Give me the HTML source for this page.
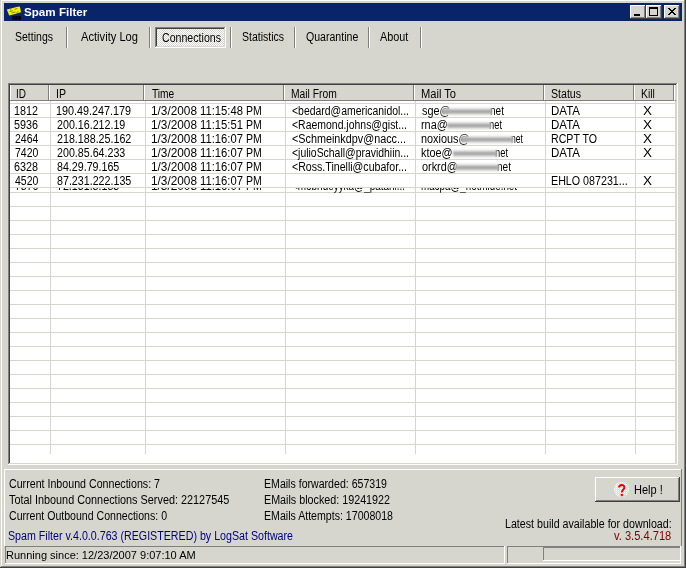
<!DOCTYPE html><html><head><meta charset="utf-8"><title>Spam Filter</title><style>
html,body{margin:0;padding:0}
body{width:686px;height:568px;background:#d6d6ce;position:relative;overflow:hidden;font-family:"Liberation Sans", Arial, sans-serif;font-size:12.5px;color:#000}
div,span,svg{position:absolute;display:block}
.t{white-space:pre;transform-origin:0 0;line-height:1}
.lv{overflow:hidden}
</style></head><body>
<div style="left:0px;top:0px;width:686px;height:1px;background:#fff;"></div>
<div style="left:0px;top:0px;width:1px;height:568px;background:#d6d6ce;"></div>
<div style="left:1px;top:0px;width:1px;height:567px;background:#fff;"></div>
<div style="left:684px;top:0px;width:1px;height:567px;background:#808080;"></div>
<div style="left:685px;top:0px;width:1px;height:568px;background:#404040;"></div>
<div style="left:1px;top:566px;width:684px;height:1px;background:#808080;"></div>
<div style="left:0px;top:567px;width:686px;height:1px;background:#404040;"></div>
<div style="left:4px;top:3px;width:678px;height:18px;background:#0a246a;"></div>
<svg style="left:4px;top:4px" width="18" height="17" viewBox="4 4 18 17"><polygon points="6.8,9.4 12,8.2 16.5,6.9 19.7,6.4 20.4,9 20.9,12.2 15,13.9 9.2,15.4 8,12.5" fill="#f6f008"/><path d="M9.6 11.6 L12.8 10.7 M11.6 13 L15.6 11.9 M14.6 9.3 L17.4 8.6 M16.6 12.4 L18.6 11.7 M10 10 L11.2 9.7" stroke="#7c7a18" stroke-width="0.9" fill="none"/><path d="M12.2 19.7 V16.6 H13.6 V16.1 H15 V16.6 H16.2 V16 H18 V16.5 H19.4 V16.1 H21 V19.7 Z" fill="#00000c"/><rect x="14" y="17.3" width="0.9" height="1.4" fill="#0a246a"/><rect x="17.2" y="17.3" width="0.9" height="1.4" fill="#0a246a"/></svg>
<div style="left:630px;top:5px;width:16px;height:14px;background:#d6d6ce;"></div><div style="left:630px;top:5px;width:15px;height:1px;background:#fff;"></div><div style="left:630px;top:5px;width:1px;height:13px;background:#fff;"></div><div style="left:630px;top:18px;width:16px;height:1px;background:#404040;"></div><div style="left:645px;top:5px;width:1px;height:14px;background:#404040;"></div><div style="left:631px;top:17px;width:14px;height:1px;background:#808080;"></div><div style="left:644px;top:6px;width:1px;height:12px;background:#808080;"></div>
<div style="left:646px;top:5px;width:16px;height:14px;background:#d6d6ce;"></div><div style="left:646px;top:5px;width:15px;height:1px;background:#fff;"></div><div style="left:646px;top:5px;width:1px;height:13px;background:#fff;"></div><div style="left:646px;top:18px;width:16px;height:1px;background:#404040;"></div><div style="left:661px;top:5px;width:1px;height:14px;background:#404040;"></div><div style="left:647px;top:17px;width:14px;height:1px;background:#808080;"></div><div style="left:660px;top:6px;width:1px;height:12px;background:#808080;"></div>
<div style="left:664px;top:5px;width:16px;height:14px;background:#d6d6ce;"></div><div style="left:664px;top:5px;width:15px;height:1px;background:#fff;"></div><div style="left:664px;top:5px;width:1px;height:13px;background:#fff;"></div><div style="left:664px;top:18px;width:16px;height:1px;background:#404040;"></div><div style="left:679px;top:5px;width:1px;height:14px;background:#404040;"></div><div style="left:665px;top:17px;width:14px;height:1px;background:#808080;"></div><div style="left:678px;top:6px;width:1px;height:12px;background:#808080;"></div>
<div style="left:634px;top:14px;width:6px;height:2px;background:#000;"></div>
<div style="left:649px;top:7px;width:9px;height:9px;background:transparent;box-sizing:border-box;border:1px solid #000;border-top-width:2px"></div>
<svg style="left:668px;top:8px" width="8" height="7" viewBox="0 0 8 7" shape-rendering="crispEdges"><path d="M0 0h2v1h1v1h1v1h1v1h1v1h1v1h1v1h-2v-1h-1v-1h-1v-1h-1v-1h-1v-1h-1z M6 0h2v1h-1v1h-1v1h-1v1h-1v1h-1v1h-1v1h-2v-1h1v-1h1v-1h1v-1h1v-1h1v-1h1z" fill="#000"/></svg>
<div style="left:66px;top:27px;width:1px;height:21px;background:#808080;"></div>
<div style="left:67px;top:27px;width:1px;height:21px;background:#fff;"></div>
<div style="left:149px;top:27px;width:1px;height:21px;background:#808080;"></div>
<div style="left:150px;top:27px;width:1px;height:21px;background:#fff;"></div>
<div style="left:230px;top:27px;width:1px;height:21px;background:#808080;"></div>
<div style="left:231px;top:27px;width:1px;height:21px;background:#fff;"></div>
<div style="left:294px;top:27px;width:1px;height:21px;background:#808080;"></div>
<div style="left:295px;top:27px;width:1px;height:21px;background:#fff;"></div>
<div style="left:368px;top:27px;width:1px;height:21px;background:#808080;"></div>
<div style="left:369px;top:27px;width:1px;height:21px;background:#fff;"></div>
<div style="left:420px;top:27px;width:1px;height:21px;background:#808080;"></div>
<div style="left:421px;top:27px;width:1px;height:21px;background:#fff;"></div>
<div style="left:155px;top:27px;width:71px;height:21px;background-color:#d6d6ce;background-image:linear-gradient(45deg,#fff 25%,transparent 25%,transparent 75%,#fff 75%),linear-gradient(45deg,#fff 25%,transparent 25%,transparent 75%,#fff 75%);background-size:2px 2px;background-position:0 0,1px 1px"></div>
<div style="left:155px;top:27px;width:71px;height:1px;background:#808080;"></div>
<div style="left:155px;top:27px;width:1px;height:21px;background:#808080;"></div>
<div style="left:156px;top:28px;width:69px;height:1px;background:#404040;"></div>
<div style="left:156px;top:28px;width:1px;height:19px;background:#404040;"></div>
<div style="left:155px;top:47px;width:71px;height:1px;background:#fff;"></div>
<div style="left:225px;top:27px;width:1px;height:21px;background:#fff;"></div>
<div style="left:156px;top:46px;width:69px;height:1px;background:#d6d6ce;"></div>
<div style="left:224px;top:28px;width:1px;height:19px;background:#d6d6ce;"></div>
<div style="left:8px;top:83px;width:670px;height:1px;background:#808080;"></div>
<div style="left:8px;top:83px;width:1px;height:382px;background:#808080;"></div>
<div style="left:9px;top:84px;width:668px;height:1px;background:#404040;"></div>
<div style="left:9px;top:84px;width:1px;height:380px;background:#404040;"></div>
<div style="left:8px;top:464px;width:670px;height:1px;background:#fff;"></div>
<div style="left:677px;top:83px;width:1px;height:382px;background:#fff;"></div>
<div style="left:9px;top:463px;width:668px;height:1px;background:#d6d6ce;"></div>
<div style="left:676px;top:84px;width:1px;height:380px;background:#d6d6ce;"></div>
<div style="left:10px;top:85px;width:666px;height:378px;background:#fff;"></div>
<div style="left:10px;top:85px;width:666px;height:16px;background:#d6d6ce;"></div>
<div style="left:10px;top:85px;width:1px;height:15px;background:#fff;"></div>
<div style="left:48px;top:85px;width:1px;height:16px;background:#808080;"></div>
<div style="left:49px;top:85px;width:1px;height:15px;background:#fff;"></div>
<div style="left:143px;top:85px;width:1px;height:16px;background:#808080;"></div>
<div style="left:144px;top:85px;width:1px;height:15px;background:#fff;"></div>
<div style="left:283px;top:85px;width:1px;height:16px;background:#808080;"></div>
<div style="left:284px;top:85px;width:1px;height:15px;background:#fff;"></div>
<div style="left:413px;top:85px;width:1px;height:16px;background:#808080;"></div>
<div style="left:414px;top:85px;width:1px;height:15px;background:#fff;"></div>
<div style="left:543px;top:85px;width:1px;height:16px;background:#808080;"></div>
<div style="left:544px;top:85px;width:1px;height:15px;background:#fff;"></div>
<div style="left:633px;top:85px;width:1px;height:16px;background:#808080;"></div>
<div style="left:634px;top:85px;width:1px;height:15px;background:#fff;"></div>
<div style="left:673px;top:85px;width:1px;height:16px;background:#808080;"></div>
<div style="left:674px;top:85px;width:1px;height:15px;background:#fff;"></div>
<div style="left:10px;top:100px;width:664px;height:1px;background:#808080;"></div>
<div style="left:675px;top:100px;width:1px;height:1px;background:#808080;"></div>
<div style="left:50px;top:101px;width:1px;height:353px;background:#d6d6ce;"></div>
<div style="left:145px;top:101px;width:1px;height:353px;background:#d6d6ce;"></div>
<div style="left:285px;top:101px;width:1px;height:353px;background:#d6d6ce;"></div>
<div style="left:415px;top:101px;width:1px;height:353px;background:#d6d6ce;"></div>
<div style="left:545px;top:101px;width:1px;height:353px;background:#d6d6ce;"></div>
<div style="left:635px;top:101px;width:1px;height:353px;background:#d6d6ce;"></div>
<div style="left:675px;top:101px;width:1px;height:362px;background:#d6d6ce;"></div>
<div style="left:10px;top:103px;width:666px;height:1px;background:#d6d6ce;"></div>
<div style="left:10px;top:117px;width:666px;height:1px;background:#d6d6ce;"></div>
<div style="left:10px;top:131px;width:666px;height:1px;background:#d6d6ce;"></div>
<div style="left:10px;top:145px;width:666px;height:1px;background:#d6d6ce;"></div>
<div style="left:10px;top:159px;width:666px;height:1px;background:#d6d6ce;"></div>
<div style="left:10px;top:173px;width:666px;height:1px;background:#d6d6ce;"></div>
<div style="left:10px;top:187px;width:666px;height:1px;background:#d6d6ce;"></div>
<div style="left:10px;top:192px;width:666px;height:1px;background:#d6d6ce;"></div>
<div style="left:10px;top:206px;width:666px;height:1px;background:#d6d6ce;"></div>
<div style="left:10px;top:220px;width:666px;height:1px;background:#d6d6ce;"></div>
<div style="left:10px;top:234px;width:666px;height:1px;background:#d6d6ce;"></div>
<div style="left:10px;top:248px;width:666px;height:1px;background:#d6d6ce;"></div>
<div style="left:10px;top:262px;width:666px;height:1px;background:#d6d6ce;"></div>
<div style="left:10px;top:276px;width:666px;height:1px;background:#d6d6ce;"></div>
<div style="left:10px;top:290px;width:666px;height:1px;background:#d6d6ce;"></div>
<div style="left:10px;top:304px;width:666px;height:1px;background:#d6d6ce;"></div>
<div style="left:10px;top:318px;width:666px;height:1px;background:#d6d6ce;"></div>
<div style="left:10px;top:332px;width:666px;height:1px;background:#d6d6ce;"></div>
<div style="left:10px;top:346px;width:666px;height:1px;background:#d6d6ce;"></div>
<div style="left:10px;top:360px;width:666px;height:1px;background:#d6d6ce;"></div>
<div style="left:10px;top:374px;width:666px;height:1px;background:#d6d6ce;"></div>
<div style="left:10px;top:388px;width:666px;height:1px;background:#d6d6ce;"></div>
<div style="left:10px;top:402px;width:666px;height:1px;background:#d6d6ce;"></div>
<div style="left:10px;top:416px;width:666px;height:1px;background:#d6d6ce;"></div>
<div style="left:10px;top:430px;width:666px;height:1px;background:#d6d6ce;"></div>
<div style="left:10px;top:444px;width:666px;height:1px;background:#d6d6ce;"></div>
<div style="left:4px;top:469px;width:678px;height:1px;background:#fff;"></div>
<div style="left:4px;top:469px;width:1px;height:77px;background:#fff;"></div>
<div style="left:681px;top:469px;width:1px;height:77px;background:#808080;"></div>
<div style="left:595px;top:477px;width:84px;height:1px;background:#fff;"></div>
<div style="left:595px;top:477px;width:1px;height:24px;background:#fff;"></div>
<div style="left:595px;top:501px;width:85px;height:1px;background:#404040;"></div>
<div style="left:679px;top:477px;width:1px;height:25px;background:#404040;"></div>
<div style="left:596px;top:500px;width:83px;height:1px;background:#808080;"></div>
<div style="left:678px;top:478px;width:1px;height:23px;background:#808080;"></div>
<svg style="left:613px;top:481px" width="17" height="17" viewBox="0 0 17 17"><defs><pattern id="dth" width="2" height="2" patternUnits="userSpaceOnUse"><rect width="2" height="2" fill="#ffff00"/><rect width="1" height="1" fill="#fff"/><rect x="1" y="1" width="1" height="1" fill="#fff"/></pattern></defs><circle cx="8.5" cy="8.5" r="7.5" fill="url(#dth)"/><path d="M6.1 6.6 C6.1 3.1 11.3 3.1 11.3 6.4 C11.3 8.5 8.8 8.8 8.8 11.5" fill="none" stroke="#e60000" stroke-width="2"/><rect x="7.7" y="12.9" width="2.2" height="2.3" fill="#e60000"/></svg>
<div style="left:5px;top:546px;width:499px;height:1px;background:#808080;"></div>
<div style="left:5px;top:546px;width:1px;height:17px;background:#808080;"></div>
<div style="left:5px;top:563px;width:500px;height:1px;background:#fff;"></div>
<div style="left:504px;top:546px;width:1px;height:18px;background:#fff;"></div>
<div style="left:507px;top:546px;width:173px;height:1px;background:#808080;"></div>
<div style="left:507px;top:546px;width:1px;height:17px;background:#808080;"></div>
<div style="left:507px;top:563px;width:174px;height:1px;background:#fff;"></div>
<div style="left:680px;top:546px;width:1px;height:18px;background:#fff;"></div>
<div style="left:543px;top:547px;width:137px;height:1px;background:#808080;"></div>
<div style="left:543px;top:546px;width:1px;height:14px;background:#808080;"></div>
<div style="left:543px;top:560px;width:137px;height:1px;background:#fff;"></div>
<span class="t" style="left:23.80px;top:6.56px;transform:scaleX(1.0567);color:#fff;font-weight:bold;font-size:11px;">Spam Filter</span>
<span class="t" style="left:15.00px;top:31.37px;transform:scaleX(0.8412);">Settings</span>
<span class="t" style="left:80.80px;top:31.37px;transform:scaleX(0.8917);">Activity Log</span>
<span class="t" style="left:162.00px;top:32.37px;transform:scaleX(0.8489);">Connections</span>
<span class="t" style="left:242.00px;top:31.37px;transform:scaleX(0.8397);">Statistics</span>
<span class="t" style="left:305.80px;top:31.37px;transform:scaleX(0.8455);">Quarantine</span>
<span class="t" style="left:379.80px;top:31.37px;transform:scaleX(0.8662);">About</span>
<span class="t" style="left:16.00px;top:88.37px;transform:scaleX(0.8000);">ID</span>
<span class="t" style="left:56.00px;top:88.37px;transform:scaleX(0.8466);">IP</span>
<span class="t" style="left:151.80px;top:88.37px;transform:scaleX(0.8160);">Time</span>
<span class="t" style="left:291.00px;top:88.37px;transform:scaleX(0.8231);">Mail From</span>
<span class="t" style="left:421.00px;top:88.37px;transform:scaleX(0.8889);">Mail To</span>
<span class="t" style="left:551.00px;top:88.37px;transform:scaleX(0.8466);">Status</span>
<span class="t" style="left:641.00px;top:88.37px;transform:scaleX(0.8294);">Kill</span>
<span class="t" style="left:14.00px;top:105.37px;transform:scaleX(0.8629);">1812</span>
<span class="t" style="left:56.00px;top:105.37px;transform:scaleX(0.8632);">190.49.247.179</span>
<span class="t" style="left:151.00px;top:105.37px;transform:scaleX(0.9451);">1/3/2008</span>
<span class="t" style="left:200.00px;top:105.37px;transform:scaleX(0.9008);">11:15:48</span>
<span class="t" style="left:246.00px;top:105.37px;transform:scaleX(0.8431);">PM</span>
<span class="t" style="left:291.80px;top:105.37px;transform:scaleX(0.8345);">&lt;bedard@americanidol...</span>
<span class="t" style="left:421.80px;top:105.37px;transform:scaleX(0.8700);">sge@</span>
<span class="t" style="left:490.00px;top:105.37px;transform:scaleX(0.8050);">net</span>
<span class="t" style="left:551.00px;top:105.37px;transform:scaleX(0.9211);">DATA</span>
<span class="t" style="left:643.00px;top:105.37px;transform:scaleX(1.0787);">X</span>
<span class="t" style="left:14.00px;top:119.37px;transform:scaleX(0.8629);">5936</span>
<span class="t" style="left:56.80px;top:119.37px;transform:scaleX(0.8543);">200.16.212.19</span>
<span class="t" style="left:151.00px;top:119.37px;transform:scaleX(0.9451);">1/3/2008</span>
<span class="t" style="left:200.00px;top:119.37px;transform:scaleX(0.9008);">11:15:51</span>
<span class="t" style="left:246.00px;top:119.37px;transform:scaleX(0.8431);">PM</span>
<span class="t" style="left:291.80px;top:119.37px;transform:scaleX(0.8368);">&lt;Raemond.johns@gist...</span>
<span class="t" style="left:421.00px;top:119.37px;transform:scaleX(0.8700);">rna@</span>
<span class="t" style="left:489.00px;top:119.37px;transform:scaleX(0.7475);">net</span>
<span class="t" style="left:551.00px;top:119.37px;transform:scaleX(0.9211);">DATA</span>
<span class="t" style="left:643.00px;top:119.37px;transform:scaleX(1.0787);">X</span>
<span class="t" style="left:14.80px;top:133.37px;transform:scaleX(0.8378);">2464</span>
<span class="t" style="left:56.80px;top:133.37px;transform:scaleX(0.8551);">218.188.25.162</span>
<span class="t" style="left:151.00px;top:133.37px;transform:scaleX(0.9451);">1/3/2008</span>
<span class="t" style="left:200.00px;top:133.37px;transform:scaleX(0.9008);">11:16:07</span>
<span class="t" style="left:246.00px;top:133.37px;transform:scaleX(0.8431);">PM</span>
<span class="t" style="left:291.80px;top:133.37px;transform:scaleX(0.8646);">&lt;Schmeinkdpv@nacc...</span>
<span class="t" style="left:421.00px;top:133.37px;transform:scaleX(0.8700);">noxious@</span>
<span class="t" style="left:511.00px;top:133.37px;transform:scaleX(0.6900);">net</span>
<span class="t" style="left:551.00px;top:133.37px;transform:scaleX(0.8489);">RCPT TO</span>
<span class="t" style="left:643.00px;top:133.37px;transform:scaleX(1.0787);">X</span>
<span class="t" style="left:14.80px;top:147.37px;transform:scaleX(0.8378);">7420</span>
<span class="t" style="left:56.80px;top:147.37px;transform:scaleX(0.8543);">200.85.64.233</span>
<span class="t" style="left:151.00px;top:147.37px;transform:scaleX(0.9451);">1/3/2008</span>
<span class="t" style="left:200.00px;top:147.37px;transform:scaleX(0.9008);">11:16:07</span>
<span class="t" style="left:246.00px;top:147.37px;transform:scaleX(0.8431);">PM</span>
<span class="t" style="left:291.80px;top:147.37px;transform:scaleX(0.8345);">&lt;julioSchall@pravidhiin...</span>
<span class="t" style="left:421.00px;top:147.37px;transform:scaleX(0.8700);">ktoe@</span>
<span class="t" style="left:495.00px;top:147.37px;transform:scaleX(0.7475);">net</span>
<span class="t" style="left:551.00px;top:147.37px;transform:scaleX(0.9211);">DATA</span>
<span class="t" style="left:643.00px;top:147.37px;transform:scaleX(1.0787);">X</span>
<span class="t" style="left:14.00px;top:161.37px;transform:scaleX(0.8629);">6328</span>
<span class="t" style="left:56.80px;top:161.37px;transform:scaleX(0.8534);">84.29.79.165</span>
<span class="t" style="left:151.00px;top:161.37px;transform:scaleX(0.9451);">1/3/2008</span>
<span class="t" style="left:200.00px;top:161.37px;transform:scaleX(0.9008);">11:16:07</span>
<span class="t" style="left:246.00px;top:161.37px;transform:scaleX(0.8431);">PM</span>
<span class="t" style="left:291.80px;top:161.37px;transform:scaleX(0.8484);">&lt;Ross.Tinelli@cubafor...</span>
<span class="t" style="left:421.80px;top:161.37px;transform:scaleX(0.8700);">orkrd@</span>
<span class="t" style="left:497.00px;top:161.37px;transform:scaleX(0.8050);">net</span>
<span class="t" style="left:14.80px;top:175.37px;transform:scaleX(0.8378);">4520</span>
<span class="t" style="left:56.80px;top:175.37px;transform:scaleX(0.8551);">87.231.222.135</span>
<span class="t" style="left:151.00px;top:175.37px;transform:scaleX(0.9451);">1/3/2008</span>
<span class="t" style="left:200.00px;top:175.37px;transform:scaleX(0.9008);">11:16:07</span>
<span class="t" style="left:246.00px;top:175.37px;transform:scaleX(0.8431);">PM</span>
<span class="t" style="left:551.00px;top:175.37px;transform:scaleX(0.8557);">EHLO 087231...</span>
<span class="t" style="left:643.00px;top:175.37px;transform:scaleX(1.0787);">X</span>
<span class="t" style="left:14.80px;top:180.37px;transform:scaleX(0.8378);clip-path:inset(7.63px 0 0 0);">7876</span>
<span class="t" style="left:56.80px;top:180.37px;transform:scaleX(0.8534);clip-path:inset(7.63px 0 0 0);">72.151.8.183</span>
<span class="t" style="left:151.00px;top:180.37px;transform:scaleX(0.9451);clip-path:inset(7.63px 0 0 0);">1/3/2008</span>
<span class="t" style="left:200.00px;top:180.37px;transform:scaleX(0.9008);clip-path:inset(7.63px 0 0 0);">11:16:07</span>
<span class="t" style="left:246.00px;top:180.37px;transform:scaleX(0.8431);clip-path:inset(7.63px 0 0 0);">PM</span>
<span class="t" style="left:291.80px;top:180.37px;transform:scaleX(0.7941);clip-path:inset(7.63px 0 0 0);">&lt;mobhdeyyka@_patahi...</span>
<span class="t" style="left:421.00px;top:180.37px;transform:scaleX(0.7838);clip-path:inset(7.63px 0 0 0);">macpa@_hotmide.net</span>
<span class="t" style="left:9.00px;top:478.37px;transform:scaleX(0.8521);">Current Inbound Connections: 7</span>
<span class="t" style="left:8.80px;top:494.37px;transform:scaleX(0.8684);">Total Inbound Connections Served: 22127545</span>
<span class="t" style="left:9.00px;top:510.37px;transform:scaleX(0.8453);">Current Outbound Connections: 0</span>
<span class="t" style="left:8.00px;top:530.37px;transform:scaleX(0.8535);color:#000080;">Spam Filter v.4.0.0.763 (REGISTERED) by LogSat Software</span>
<span class="t" style="left:264.00px;top:478.37px;transform:scaleX(0.8469);">EMails forwarded: 657319</span>
<span class="t" style="left:264.00px;top:494.37px;transform:scaleX(0.8593);">EMails blocked: 19241922</span>
<span class="t" style="left:264.00px;top:510.37px;transform:scaleX(0.8476);">EMails Attempts: 17008018</span>
<span class="t" style="left:505.00px;top:518.37px;transform:scaleX(0.8537);">Latest build available for download:</span>
<span class="t" style="left:613.80px;top:530.37px;transform:scaleX(0.8897);color:#800000;">v. 3.5.4.718</span>
<span class="t" style="left:634.00px;top:484.37px;transform:scaleX(0.8805);">Help !</span>
<span class="t" style="left:6.00px;top:549.56px;transform:scaleX(1.0006);font-size:11px;">Running since: 12/23/2007 9:07:10 AM</span>
<div style="left:442px;top:107px;width:50px;height:9px;filter:blur(1px);background:linear-gradient(180deg,rgba(255,255,255,0) 0%,rgba(232,232,232,.85) 16%,rgba(176,176,176,1) 38%,rgba(150,150,150,1) 52%,rgba(180,180,180,1) 66%,rgba(232,232,232,.85) 86%,rgba(255,255,255,0) 100%)"></div>
<div style="left:447px;top:121px;width:44px;height:9px;filter:blur(1px);background:linear-gradient(180deg,rgba(255,255,255,0) 0%,rgba(232,232,232,.85) 16%,rgba(176,176,176,1) 38%,rgba(150,150,150,1) 52%,rgba(180,180,180,1) 66%,rgba(232,232,232,.85) 86%,rgba(255,255,255,0) 100%)"></div>
<div style="left:461px;top:135px;width:52px;height:9px;filter:blur(1px);background:linear-gradient(180deg,rgba(255,255,255,0) 0%,rgba(232,232,232,.85) 16%,rgba(176,176,176,1) 38%,rgba(150,150,150,1) 52%,rgba(180,180,180,1) 66%,rgba(232,232,232,.85) 86%,rgba(255,255,255,0) 100%)"></div>
<div style="left:453px;top:149px;width:44px;height:9px;filter:blur(1px);background:linear-gradient(180deg,rgba(255,255,255,0) 0%,rgba(232,232,232,.85) 16%,rgba(176,176,176,1) 38%,rgba(150,150,150,1) 52%,rgba(180,180,180,1) 66%,rgba(232,232,232,.85) 86%,rgba(255,255,255,0) 100%)"></div>
<div style="left:455px;top:163px;width:44px;height:9px;filter:blur(1px);background:linear-gradient(180deg,rgba(255,255,255,0) 0%,rgba(232,232,232,.85) 16%,rgba(176,176,176,1) 38%,rgba(150,150,150,1) 52%,rgba(180,180,180,1) 66%,rgba(232,232,232,.85) 86%,rgba(255,255,255,0) 100%)"></div>
</body></html>
